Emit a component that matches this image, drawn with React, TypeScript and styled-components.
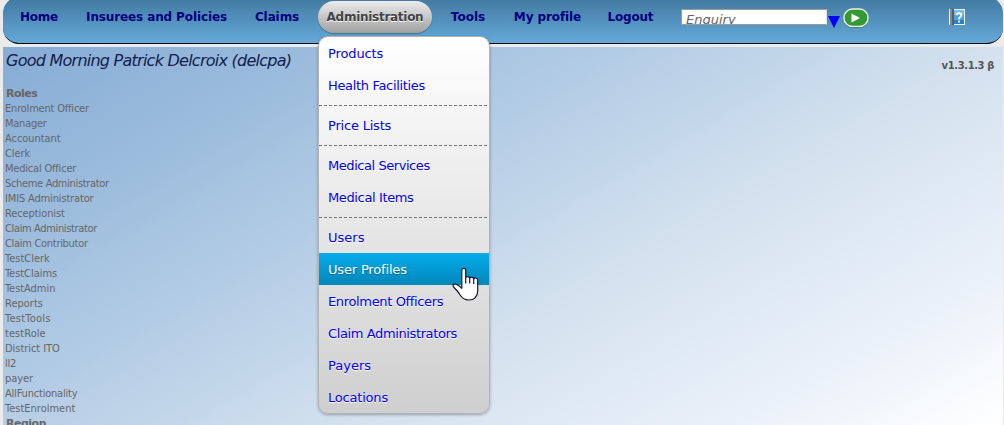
import React from "react";
import styled, { createGlobalStyle, css } from "styled-components";

const GlobalStyle = createGlobalStyle`
  *, *::before, *::after { box-sizing: border-box; }
  html, body { margin: 0; padding: 0; height: 100%; overflow: hidden; }
  body { background: #ebebeb; font-family: "DejaVu Sans", Verdana, sans-serif; }
  ul { list-style: none; margin: 0; padding: 0; }
`;

const Page = styled.div`
  width: 1004px;
  height: 425px;
  padding: 0 1px 0 3px;
  overflow: hidden;
  display: flex;
  flex-direction: column;
`;

const Header = styled.header`
  flex: none;
  height: 47px;
  margin-top: -3px;
  padding-top: 4px;
  display: flex;
  align-items: flex-start;
  border-bottom: 1px solid #000;
  border-radius: 16px;
  background: linear-gradient(#41789f, #64a9d9);
`;

const Nav = styled.nav`
  display: flex;
  gap: 5px;
  padding-left: 3px;
`;

const NavGroup = styled.div`
  display: flex;
`;

const NavItem = styled.div`
  position: relative;
`;

const NavLink = styled.a<{ $width: number; $spacing: number; $active?: boolean }>`
  display: flex;
  align-items: center;
  justify-content: center;
  width: ${(p) => p.$width}px;
  height: 32px;
  border-radius: 16px;
  font-size: 12px;
  font-weight: bold;
  letter-spacing: ${(p) => p.$spacing}px;
  white-space: nowrap;
  color: #000080;
  ${(p) =>
    p.$active &&
    css`
      color: #444;
      background: linear-gradient(#ebebeb, #a1a1a1);
      box-shadow: 0 1px 1px rgba(0, 0, 0, 0.3);
      text-shadow: 0 1px 0 #fff;
    `}
`;

const Dropdown = styled.ul`
  position: absolute;
  z-index: 2;
  top: 35px;
  left: 0;
  width: 172px;
  border: 1px solid #b4b4b4;
  border-radius: 10px;
  background: linear-gradient(#fff, #cfcfcf);
  box-shadow: 0 1px 3px rgba(0, 0, 0, 0.3);
`;

const MenuItem = styled.li<{ $selected?: boolean; $spacing: number }>`
  display: flex;
  align-items: center;
  height: 32px;
  padding: 1px 0 0 9px;
  font-size: 13px;
  letter-spacing: ${(p) => p.$spacing}px;
  white-space: nowrap;
  color: #0000f0;
  text-shadow: 0 1px 1px #fff;
  ${(p) =>
    p.$selected &&
    css`
      color: #fff;
      background: linear-gradient(#04acec, #0186ba);
      text-shadow: 0 1px 1px rgba(0, 0, 0, 0.3);
    `}
`;

const Separator = styled.li`
  height: 8px;
  padding-top: 4px;
  &::after {
    content: "";
    display: block;
    height: 1px;
    background: repeating-linear-gradient(90deg, #777 0 3px, transparent 3px 5px);
  }
`;

const Search = styled.div`
  display: flex;
  align-items: flex-start;
  margin: 8px 0 0 11px;
`;

const SearchField = styled.div`
  width: 146px;
  height: 16px;
  padding-left: 4px;
  overflow: hidden;
  border: 1px solid #9b9b9b;
  border-right-color: #e4e4e4;
  background: #fff;
  color: #666;
  font-size: 13px;
  font-style: italic;
  line-height: 20px;
`;

const Triangle = styled.svg`
  display: block;
  margin: 7px 0 0 1px;
`;

const GoButton = styled.svg`
  display: block;
  margin: -1px 0 0 3px;
`;

const HelpIcon = styled.svg`
  display: block;
  margin: 8px 0 0 80px;
`;

const Main = styled.main`
  flex: 1;
  margin-top: 3px;
  display: flex;
  justify-content: space-between;
  align-items: flex-start;
  overflow: hidden;
  background: linear-gradient(150deg, #86acd5 0%, #9abbdc 19%, #b9d0e7 42%, #d3e1ee 60%, #ebf1fa 84%, #fff 100%);
`;

const Info = styled.section`
  padding: 4px 0 0 2px;
`;

const Greeting = styled.h1`
  margin: 0;
  padding-left: 1px;
  height: 35px;
  font-size: 16px;
  font-style: italic;
  font-weight: normal;
  line-height: 19px;
  letter-spacing: -0.75px;
  white-space: nowrap;
  color: #13204c;
`;

const ListTitle = styled.h2`
  margin: 0;
  padding-left: 1px;
  font-size: 11px;
  line-height: 15px;
  letter-spacing: -0.5px;
  color: #666;
`;

const Role = styled.li<{ $spacing: number }>`
  height: 15px;
  font-family: "DejaVu Sans Condensed", "DejaVu Sans", sans-serif;
  font-size: 11px;
  line-height: 15px;
  letter-spacing: ${(p) => p.$spacing}px;
  white-space: nowrap;
  color: #666;
`;

const Version = styled.div`
  padding: 12px 9px 0 0;
  font-size: 10px;
  font-weight: bold;
  line-height: 14px;
  letter-spacing: -0.4px;
  color: #555;
`;

const Cursor = styled.svg`
  position: absolute;
  z-index: 3;
  left: 133px;
  top: 230px;
`;

const roles: [string, number][] = [
  ["Enrolment Officer", -0.2],
  ["Manager", -0.25],
  ["Accountant", -0.05],
  ["Clerk", -0.05],
  ["Medical Officer", -0.2],
  ["Scheme Administrator", -0.33],
  ["IMIS Administrator", -0.15],
  ["Receptionist", -0.1],
  ["Claim Administrator", -0.36],
  ["Claim Contributor", -0.3],
  ["TestClerk", 0],
  ["TestClaims", -0.05],
  ["TestAdmin", -0.05],
  ["Reports", 0],
  ["TestTools", 0.25],
  ["testRole", 0.05],
  ["District ITO", -0.05],
  ["ll2", -0.3],
  ["payer", -0.1],
  ["AllFunctionality", -0.2],
  ["TestEnrolment", 0],
];

const menuGroups: [string, number][][] = [
  [["Products", -0.12], ["Health Facilities", -0.33]],
  [["Price Lists", -0.2]],
  [["Medical Services", -0.44], ["Medical Items", -0.37]],
  [
    ["Users", 0],
    ["User Profiles", -0.17],
    ["Enrolment Officers", -0.35],
    ["Claim Administrators", -0.38],
    ["Payers", 0],
    ["Locations", -0.2],
  ],
];

const navGroups = [
  [
    { label: "Home", width: 66, spacing: -0.2 },
    { label: "Insurees and Policies", width: 169, spacing: -0.12 },
    { label: "Claims", width: 72, spacing: -0.1 },
  ],
  [
    { label: "Administration", width: 114, spacing: -0.28 },
    { label: "Tools", width: 72, spacing: 0 },
    { label: "My profile", width: 87, spacing: -0.1 },
    { label: "Logout", width: 79, spacing: -0.2 },
  ],
];

function AdministrationMenu() {
  return (
    <Dropdown>
      {menuGroups.map((group, i) => (
        <React.Fragment key={i}>
          {i > 0 && <Separator />}
          {group.map(([label, spacing]) => (
            <MenuItem key={label} $spacing={spacing} $selected={label === "User Profiles"}>
              {label}
            </MenuItem>
          ))}
        </React.Fragment>
      ))}
      <Cursor width="27" height="35" viewBox="0 0 27 35">
        <path
          d="M9.8 3.3C9.8.8 13.7.8 13.7 3.3V11c0-2 4-2 4 .5 0-2 4-1.8 4 .5 0-1.6 4-1.4 4 1V24c0 5.5-3.5 9-8.7 9-4.2 0-7.2-2-9.2-5.5-1.2-2.3-3.3-4.5-5.8-7C0 18.6 1.8 16.4 4 17.3c2.2.8 4 2.2 5.8 4Z"
          fill="#fff" stroke="#17172c" strokeWidth="1.2" strokeLinejoin="round"
        />
        <path d="M13.7 11v5.5M17.7 11.5v5M21.7 12v5" fill="none" stroke="#17172c" strokeWidth="1.2" />
      </Cursor>
    </Dropdown>
  );
}

export default function App() {
  return (
    <>
      <GlobalStyle />
      <Page>
        <Header>
          <Nav>
            {navGroups.map((group, i) => (
              <NavGroup key={i}>
                {group.map(({ label, width, spacing }) => (
                  <NavItem key={label}>
                    <NavLink $width={width} $spacing={spacing} $active={label === "Administration"}>
                      {label}
                    </NavLink>
                    {label === "Administration" && <AdministrationMenu />}
                  </NavItem>
                ))}
              </NavGroup>
            ))}
          </Nav>
          <Search>
            <SearchField>Enquiry</SearchField>
            <Triangle width="12" height="12" viewBox="0 0 12 12">
              <path d="M0 0H12L6 12Z" fill="#0000ff" />
            </Triangle>
            <GoButton width="26" height="20" viewBox="0 0 26 20">
              <rect x="1" y="1.8" width="24" height="18" rx="8.5" fill="#17401c" />
              <rect x="1" y="1" width="24" height="17.5" rx="8.5" fill="#339933" stroke="#e9f2e9" strokeWidth="1.4" />
              <path d="M8.5 5.5v9l8.5-4.5Z" fill="#fff" />
            </GoButton>
          </Search>
          <HelpIcon width="16" height="16" viewBox="0 0 16 16">
            <rect width="16" height="16" fill="#eef4f8" />
            <rect x="1" width="2" height="16" fill="#85878a" />
            <rect x="3" width="2" height="16" fill="#5b5d60" />
            <rect x="5" y="1" width="10" height="5" fill="#79bce8" />
            <rect x="5" y="6" width="10" height="5" fill="#4fa3dc" />
            <rect x="5" y="11" width="10" height="4" fill="#2484cb" />
            <path d="M7.5 6.2C7.5 3.4 12.3 3.4 12.3 6.2 12.3 8 9.9 7.8 9.9 10.2M9.9 11.5v2" fill="none" stroke="#fff" strokeWidth="1.8" />
          </HelpIcon>
        </Header>
        <Main>
          <Info>
            <Greeting>Good Morning Patrick Delcroix (delcpa)</Greeting>
            <ListTitle>Roles</ListTitle>
            <ul>
              {roles.map(([role, spacing]) => (
                <Role key={role} $spacing={spacing}>{role}</Role>
              ))}
            </ul>
            <ListTitle>Region</ListTitle>
          </Info>
          <Version>v1.3.1.3 β</Version>
        </Main>
      </Page>
    </>
  );
}
